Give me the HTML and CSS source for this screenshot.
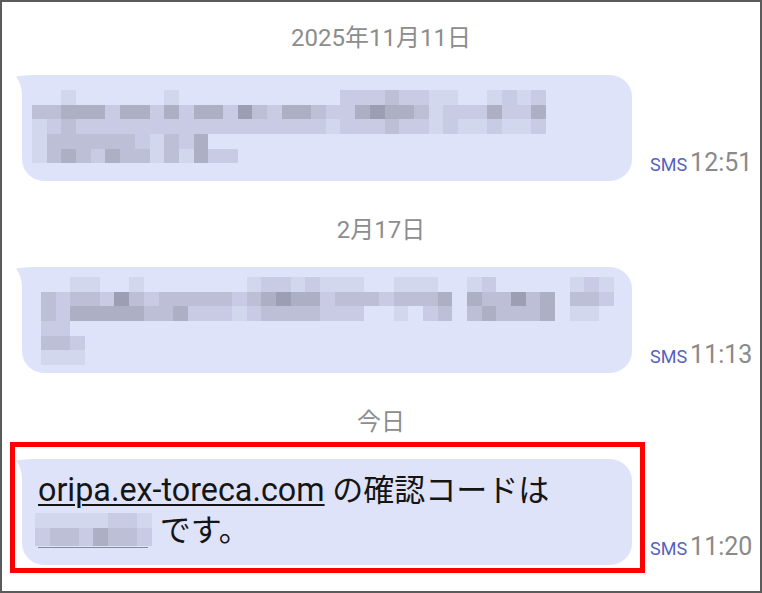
FILE: index.html
```html
<!DOCTYPE html>
<html lang="ja">
<head>
<meta charset="utf-8">
<title>SMS</title>
<link rel="stylesheet" href="styles.css">
</head>
<body>
<div class="screen">
  <div class="date date-first">2025年11月11日</div>
  <div class="row">
    <div class="bubble bubble-m1">
      <svg class="tail" viewBox="0 0 30 30" width="30" height="30"><path d="M30 0 L19 0 Q10 0 2 1.5 Q7 8 8 18 L8 30 L30 30 Z"/></svg>
      <div class="mosaic">
        <div class="mrow"><i></i><i></i><i class="c1"></i><i></i><i></i><i></i><i></i><i></i><i></i><i class="c1"></i><i></i><i></i><i></i><i></i><i></i><i></i><i></i><i></i><i></i><i></i><i></i><i class="c2"></i><i class="c2"></i><i class="c2"></i><i class="c3"></i><i class="c2"></i><i class="c2"></i><i class="c1"></i><i class="c1"></i><i></i><i></i><i class="c1"></i><i class="c2"></i><i class="c1"></i><i class="c2"></i></div>
        <div class="mrow"><i class="c3"></i><i class="c3"></i><i class="c4"></i><i class="c4"></i><i class="c4"></i><i class="c2"></i><i class="c4"></i><i class="c4"></i><i class="c2"></i><i class="c4"></i><i class="c2"></i><i class="c4"></i><i class="c4"></i><i class="c2"></i><i class="c5"></i><i class="c3"></i><i class="c2"></i><i class="c4"></i><i class="c4"></i><i class="c3"></i><i class="c2"></i><i class="c2"></i><i class="c4"></i><i class="c5"></i><i class="c4"></i><i class="c4"></i><i class="c3"></i><i class="c1"></i><i class="c2"></i><i class="c2"></i><i class="c2"></i><i class="c4"></i><i class="c2"></i><i class="c2"></i><i class="c4"></i></div>
        <div class="mrow"><i class="c1"></i><i class="c2"></i><i class="c3"></i><i class="c2"></i><i class="c2"></i><i class="c2"></i><i class="c2"></i><i class="c2"></i><i class="c2"></i><i class="c2"></i><i class="c2"></i><i class="c2"></i><i class="c2"></i><i class="c2"></i><i class="c2"></i><i class="c2"></i><i class="c2"></i><i class="c2"></i><i class="c2"></i><i class="c2"></i><i class="c1"></i><i class="c2"></i><i class="c2"></i><i class="c2"></i><i class="c3"></i><i class="c2"></i><i class="c2"></i><i class="c1"></i><i class="c2"></i><i class="c1"></i><i class="c1"></i><i class="c2"></i><i class="c1"></i><i class="c1"></i><i class="c2"></i></div>
        <div class="mrow"><i class="c1"></i><i class="c3"></i><i class="c3"></i><i class="c3"></i><i class="c3"></i><i class="c3"></i><i class="c3"></i><i class="c2"></i><i class="c1"></i><i class="c3"></i><i class="c2"></i><i class="c4"></i></div>
        <div class="mrow"><i class="c1"></i><i class="c3"></i><i class="c4"></i><i class="c3"></i><i class="c2"></i><i class="c4"></i><i class="c3"></i><i class="c3"></i><i class="c1"></i><i class="c3"></i><i class="c1"></i><i class="c4"></i><i class="c2"></i><i class="c2"></i></div>
      </div>
    </div>
    <div class="meta"><span class="sms">SMS</span><span class="time">12:51</span></div>
  </div>

  <div class="date">2月17日</div>
  <div class="row">
    <div class="bubble bubble-m2">
      <svg class="tail" viewBox="0 0 30 30" width="30" height="30"><path d="M30 0 L19 0 Q10 0 2 1.5 Q7 8 8 18 L8 30 L30 30 Z"/></svg>
      <div class="mosaic">
        <div class="mrow"><i></i><i></i><i class="c1"></i><i class="c1"></i><i></i><i></i><i class="c1"></i><i></i><i></i><i></i><i></i><i></i><i></i><i></i><i class="c1"></i><i class="c2"></i><i class="c2"></i><i class="c1"></i><i class="c2"></i><i class="c1"></i><i class="c1"></i><i class="c1"></i><i></i><i></i><i class="c1"></i><i class="c1"></i><i class="c1"></i><i></i><i></i><i class="c1"></i><i class="c2"></i><i></i><i></i><i></i><i></i><i></i><i class="c1"></i><i class="c2"></i><i class="c1"></i></div>
        <div class="mrow"><i class="c3"></i><i class="c2"></i><i class="c3"></i><i class="c3"></i><i class="c2"></i><i class="c5"></i><i class="c3"></i><i class="c2"></i><i class="c3"></i><i class="c3"></i><i class="c3"></i><i class="c3"></i><i class="c3"></i><i class="c2"></i><i class="c3"></i><i class="c4"></i><i class="c5"></i><i class="c4"></i><i class="c4"></i><i class="c2"></i><i class="c3"></i><i class="c3"></i><i class="c3"></i><i class="c2"></i><i class="c3"></i><i class="c3"></i><i class="c3"></i><i class="c4"></i><i></i><i class="c4"></i><i class="c3"></i><i class="c3"></i><i class="c5"></i><i class="c3"></i><i class="c4"></i><i></i><i class="c3"></i><i class="c3"></i><i class="c2"></i></div>
        <div class="mrow"><i class="c3"></i><i class="c2"></i><i class="c4"></i><i class="c4"></i><i class="c4"></i><i class="c4"></i><i class="c4"></i><i class="c3"></i><i class="c3"></i><i class="c4"></i><i class="c2"></i><i class="c2"></i><i class="c2"></i><i class="c1"></i><i class="c2"></i><i class="c3"></i><i class="c3"></i><i class="c3"></i><i class="c3"></i><i class="c2"></i><i class="c2"></i><i class="c2"></i><i></i><i></i><i class="c1"></i><i></i><i class="c2"></i><i class="c3"></i><i></i><i class="c3"></i><i class="c4"></i><i class="c3"></i><i class="c3"></i><i class="c3"></i><i class="c4"></i><i></i><i class="c1"></i><i class="c1"></i><i></i></div>
        <div class="mrow"><i class="c2"></i><i class="c2"></i></div>
        <div class="mrow"><i class="c3"></i><i class="c3"></i><i class="c2"></i></div>
        <div class="mrow"><i class="c1"></i><i class="c1"></i><i class="c1"></i></div>
      </div>
    </div>
    <div class="meta"><span class="sms">SMS</span><span class="time">11:13</span></div>
  </div>

  <div class="date">今日</div>
  <div class="row row-marked">
    <div class="bubble bubble-text">
      <svg class="tail" viewBox="0 0 30 30" width="30" height="30"><path d="M30 0 L19 0 Q10 0 2 1.5 Q7 8 8 18 L8 30 L30 30 Z"/></svg>
      <p class="msg"><span class="link">oripa.ex-toreca.com</span> の確認コードは<br><span class="code"><span class="mrow code-top"><i class="c1"></i><i class="c1"></i><i class="c1"></i><i class="c1"></i><i class="c1"></i><i class="c2"></i><i class="c2"></i><i class="c1"></i></span><span class="mrow code-bot"><i class="c2"></i><i class="c3"></i><i class="c3"></i><i class="c2"></i><i class="c4"></i><i class="c3"></i><i class="c3"></i><i class="c2"></i></span></span>です。</p>
    </div>
    <div class="meta"><span class="sms">SMS</span><span class="time">11:20</span></div>
    <div class="highlight"></div>
  </div>
</div>
</body>
</html>
```

FILE: styles.css
```css
html, body {
  margin: 0;
  padding: 0;
  background: #ffffff;
}

.screen {
  width: 762px;
  height: 593px;
  box-sizing: border-box;
  border: 2px solid #5b5b5b;
  background: #ffffff;
  font-family: Roboto, "Noto Sans CJK JP", sans-serif;
  overflow: hidden;
}

.date {
  height: 30px;
  line-height: 30px;
  font-size: 24px;
  color: #8d8d8d;
  text-align: center;
  margin: 34px 0 22px;
}

.date-first {
  margin-top: 21px;
}

.row {
  display: flex;
  align-items: flex-end;
  padding-left: 20px;
}

.row-marked {
  position: relative;
}

.bubble {
  position: relative;
  flex: none;
  width: 610px;
  height: 106px;
  box-sizing: border-box;
  background: #dfe3fa;
  border-radius: 22px;
}

.tail {
  position: absolute;
  left: -8px;
  top: 0;
  fill: #dfe3fa;
}

.bubble-m1 {
  padding: 15px 0 0 10px;
}

.bubble-m2 {
  padding: 10px 0 0 19px;
}

.mosaic {
  position: relative;
  filter: blur(0.5px);
}

.mrow {
  display: flex;
  height: 14.7px;
}

.mrow i {
  flex: none;
  width: 14.7px;
  height: 100%;
}

.c1 { background: #d3d7ee; }
.c2 { background: #c8cbe3; }
.c3 { background: #bcbfd6; }
.c4 { background: #adafc5; }
.c5 { background: #9c9eb3; }

.meta {
  flex: none;
  margin-left: 18px;
  margin-bottom: 3px;
  line-height: 24px;
  white-space: nowrap;
}

.sms {
  font-size: 18px;
  color: #5462c0;
}

.time {
  font-size: 25px;
  color: #8a8a8a;
  margin-left: 3px;
}

.bubble-text {
  padding: 11px 0 0 16px;
}

.msg {
  position: relative;
  margin: 0;
  font-size: 31px;
  line-height: 40px;
  color: #151515;
}

.link {
  font-size: 32.3px;
  text-decoration: underline;
  text-decoration-thickness: 1.5px;
  text-underline-offset: 3px;
}

.code {
  display: inline-block;
  position: relative;
  vertical-align: -5px;
  padding-bottom: 3px;
  margin-left: -3px;
  margin-right: 8px;
  filter: blur(0.4px);
}

.code .mrow i {
  width: 14.6px;
}

.code-top {
  height: 15px;
}

.code-bot {
  height: 18px;
}

.code::after {
  content: "";
  position: absolute;
  left: 3px;
  right: 4px;
  bottom: 1px;
  height: 1.5px;
  background: #8a8b95;
}

.highlight {
  position: absolute;
  left: 8px;
  top: -17px;
  width: 635px;
  height: 131px;
  box-sizing: border-box;
  border: 5px solid #ff0000;
  pointer-events: none;
}
```
